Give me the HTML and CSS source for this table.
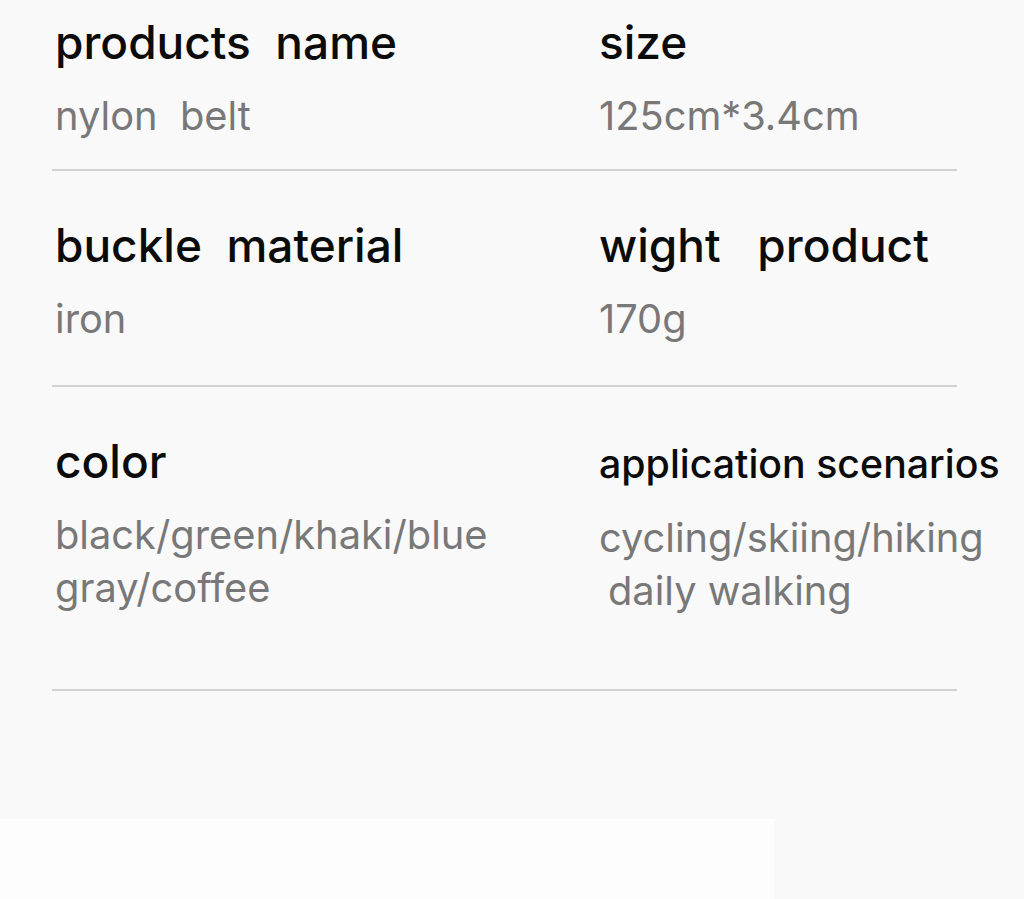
FILE: index.html
```html
<!DOCTYPE html>
<html lang="en">
<head>
<meta charset="utf-8">
<title>Product specifications</title>
<link rel="stylesheet" href="styles.css">
</head>
<body>
<main class="page">
  <section class="sheet">
    <div class="row row-first">
      <div class="cell">
        <div class="label">products  name</div>
        <div class="value">nylon  belt</div>
      </div>
      <div class="cell">
        <div class="label">size</div>
        <div class="value">125cm*3.4cm</div>
      </div>
    </div>
    <div class="row row-second">
      <div class="cell">
        <div class="label">buckle  material</div>
        <div class="value">iron</div>
      </div>
      <div class="cell">
        <div class="label">wight   product</div>
        <div class="value">170g</div>
      </div>
    </div>
    <div class="row row-third">
      <div class="cell">
        <div class="label">color</div>
        <div class="value">black/green/khaki/blue<br>gray/coffee</div>
      </div>
      <div class="cell">
        <div class="label label-small">application scenarios</div>
        <div class="value">cycling/skiing/hiking<br><span class="indent">daily walking</span></div>
      </div>
    </div>
  </section>
  <div class="footer-card"></div>
</main>
</body>
</html>
```

FILE: styles.css
```css
html, body {
  margin: 0;
  padding: 0;
}

body {
  background: #f9f9f9;
  font-family: "Inter", "Noto Sans", "DejaVu Sans", sans-serif;
  width: 1024px;
  height: 899px;
  overflow: hidden;
}

.page {
  display: flex;
  flex-direction: column;
}

.sheet {
  margin-left: 52px;
  width: 905px;
  display: flex;
  flex-direction: column;
}

.row {
  display: grid;
  grid-template-columns: 547px 1fr;
  align-items: baseline;
  border-bottom: 2px solid #d2d2d2;
  padding-top: 46px;
}

.row-first {
  padding-top: 14px;
  padding-bottom: 27px;
}

.row-second {
  padding-bottom: 40px;
}

.row-third {
  padding-bottom: 72px;
}

.cell {
  display: flex;
  flex-direction: column;
  gap: 19px;
}

.cell:first-child {
  padding-left: 3px;
}

.label {
  font-size: 46px;
  line-height: 56px;
  font-weight: 500;
  color: #0b0b0b;
  white-space: pre;
}

.label-small {
  font-size: 39.3px;
}

.value {
  font-size: 39.8px;
  line-height: 53px;
  font-weight: 400;
  color: #787878;
  white-space: pre;
}

.indent {
  padding-left: 9px;
}

.footer-card {
  margin-top: 128px;
  width: 774px;
  height: 80px;
  background: #fefdfe;
}
```
